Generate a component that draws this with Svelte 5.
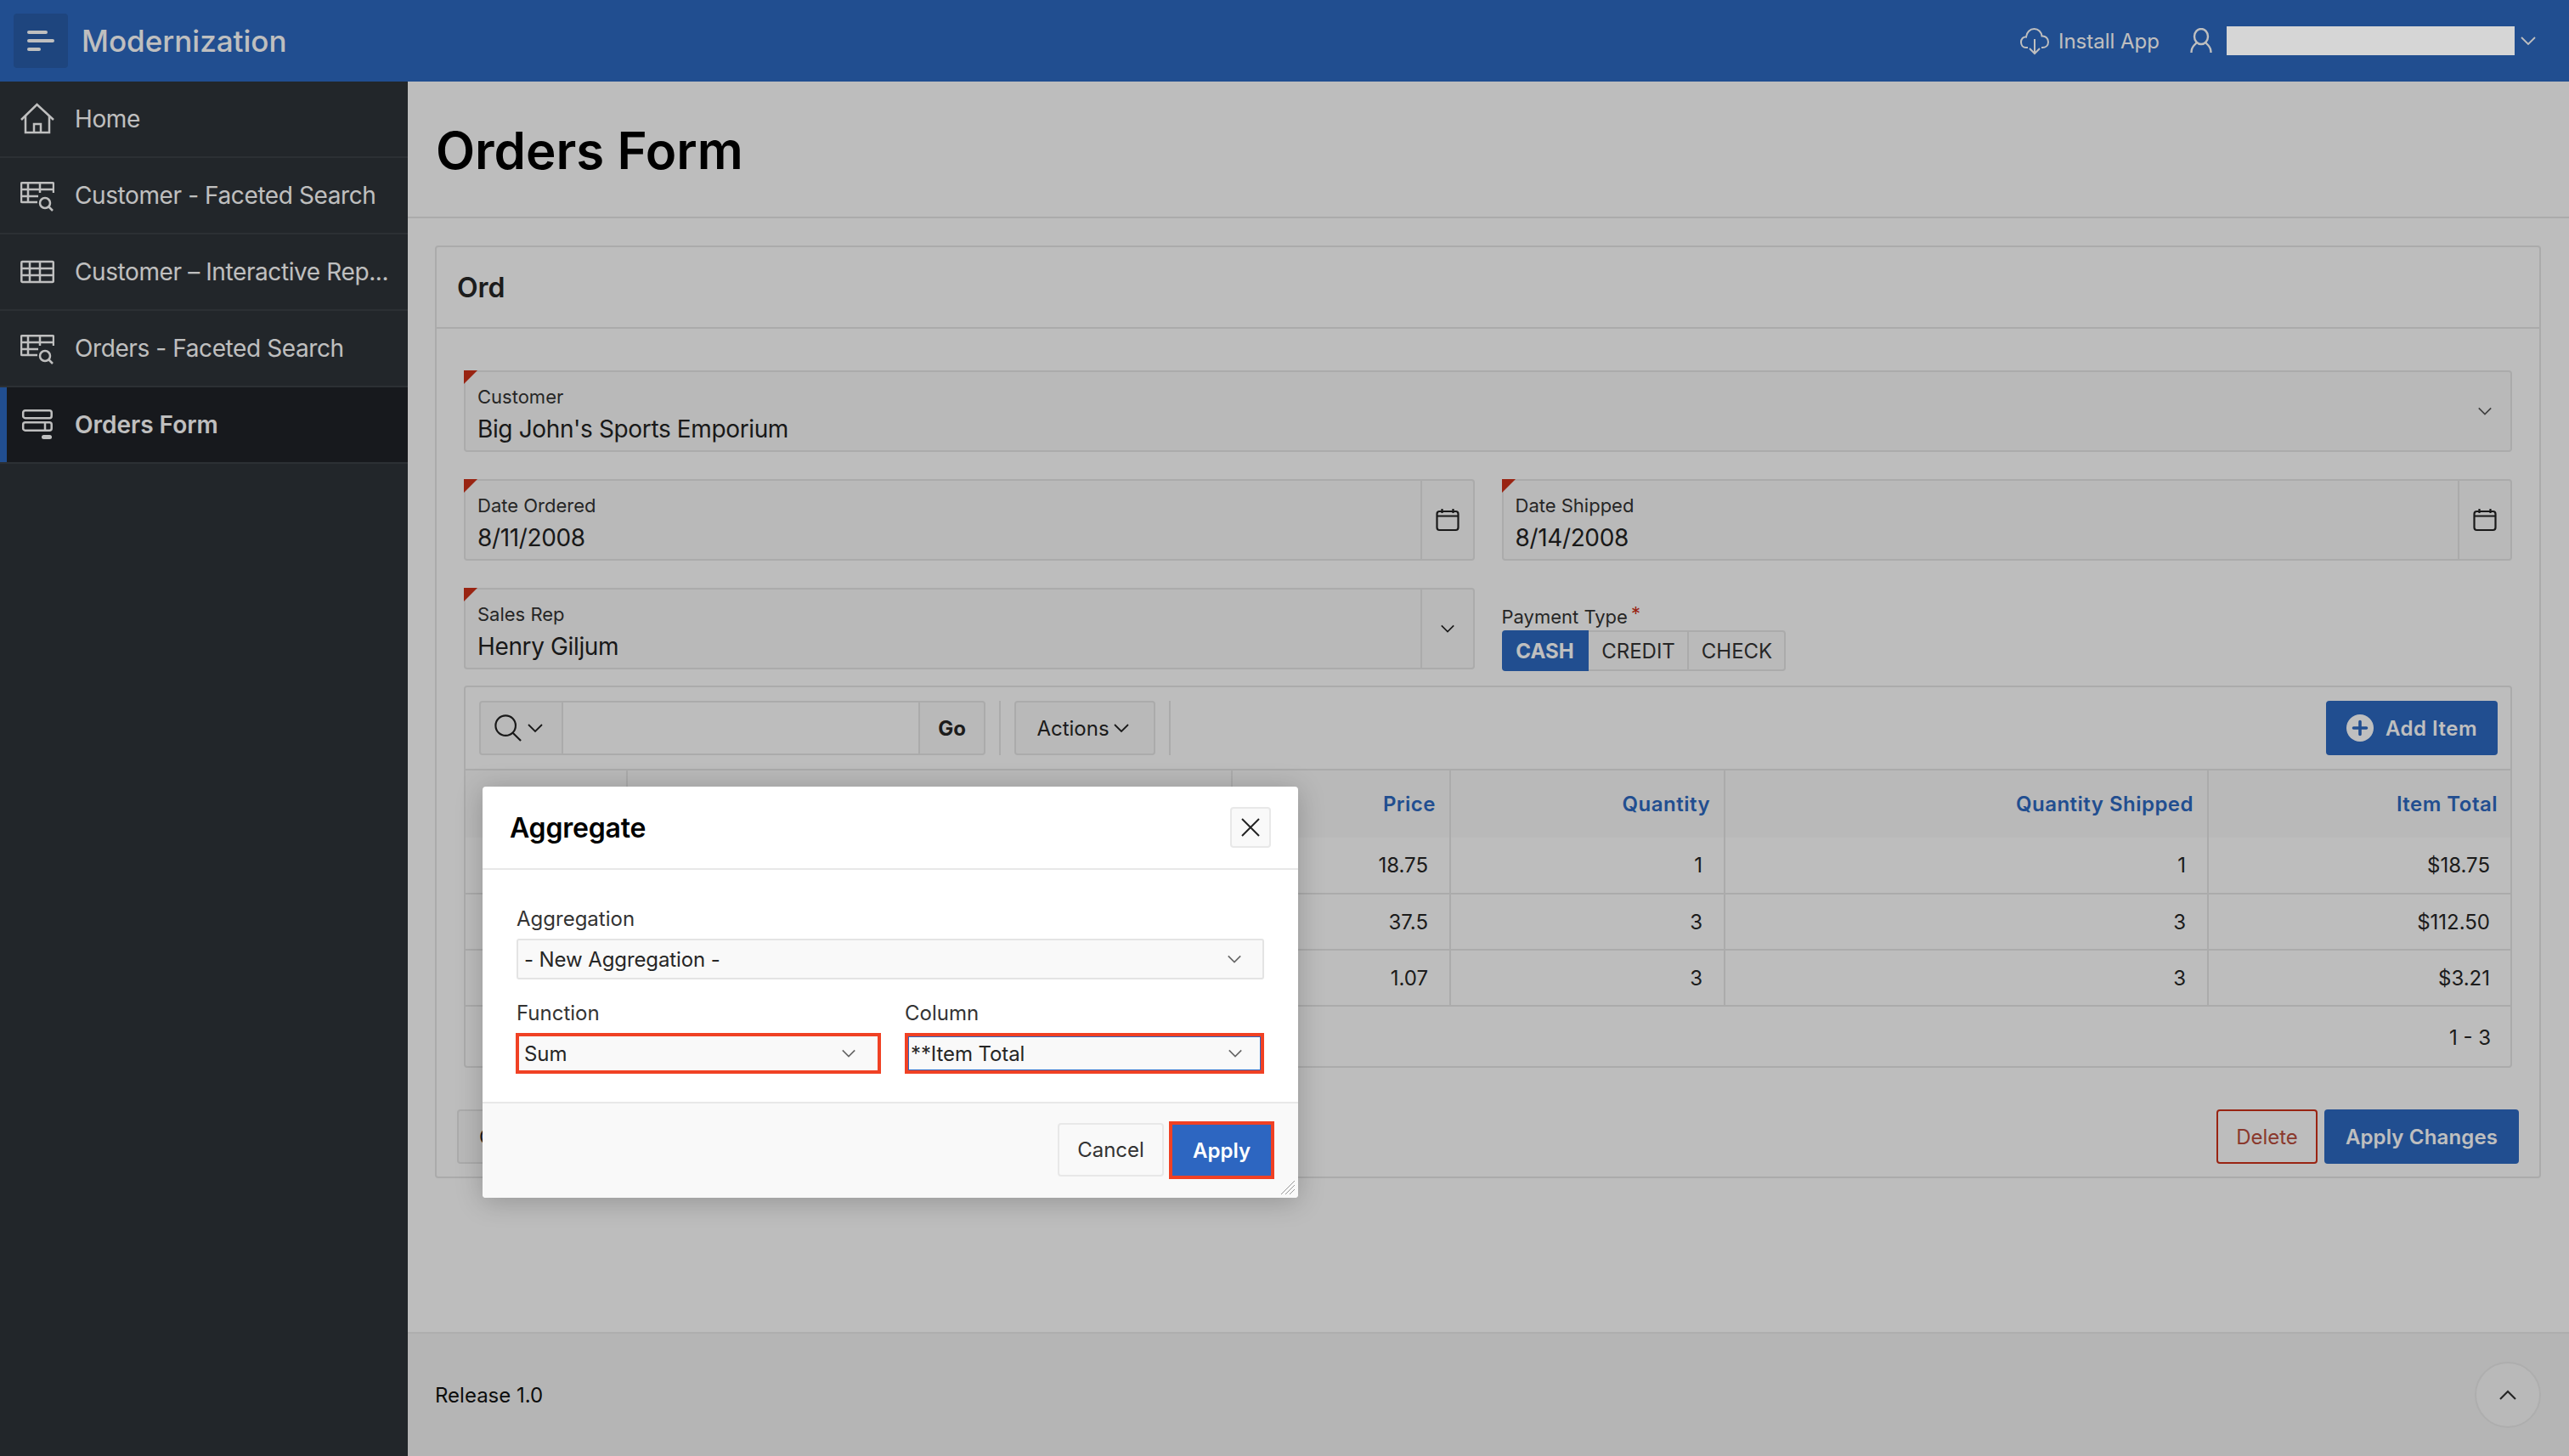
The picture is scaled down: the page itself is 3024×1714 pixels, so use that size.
<script>
  const nav = [
    { label: 'Home', icon: 'home' },
    { label: 'Customer - Faceted Search', icon: 'tsearch' },
    { label: 'Customer – Interactive Rep...', icon: 'table' },
    { label: 'Orders - Faceted Search', icon: 'tsearch' },
    { label: 'Orders Form', icon: 'form', active: true }
  ];
  const rows = [
    ['18.75', '1', '1', '$18.75'],
    ['37.5', '3', '3', '$112.50'],
    ['1.07', '3', '3', '$3.21']
  ];
</script>

{#snippet chevron(size = 20, stroke = '#555')}
  <svg class="chev" width={size} height={size} viewBox="0 0 20 20" fill="none" stroke={stroke} stroke-width="1.8"><path d="M2 6l8 8 8-8" /></svg>
{/snippet}

{#snippet calendar()}
  <svg width="28" height="28" viewBox="0 0 28 28" fill="none" stroke="#222" stroke-width="2.2"><rect x="1.5" y="4" width="25" height="22" rx="3" /><path d="M1.5 9.5h25M7.5 1v5M20.5 1v5" /></svg>
{/snippet}

<div class="app">
  <header class="top">
    <button class="toggle" aria-label="Toggle navigation">
      <svg width="32" height="24" viewBox="0 0 32 24" fill="#fff"><rect x="0" y="0" width="24" height="4" rx="2" /><rect x="0" y="10" width="32" height="4" rx="2" /><rect x="0" y="20" width="16" height="4" rx="2" /></svg>
    </button>
    <div class="brand">Modernization</div>
    <div class="top-right">
      <svg class="cloud" width="36" height="34" viewBox="0 0 36 34" fill="none" stroke="#fff" stroke-width="2"><path d="M10 25H8c-4 0-6-3-6-6.5S4.500 12 8 12.500C8.500 7 12.500 3 17.500 3S26 7 26.500 11.500C31 11 34 14.500 34 18.500S31 25 27 25h-1" /><path d="M18 15v17M12 26l6 6 6-6" /></svg>
      <span class="install">Install App</span>
      <svg class="user" width="26" height="30" viewBox="0 0 26 30" fill="none" stroke="#fff" stroke-width="2.4"><ellipse cx="13" cy="10" rx="8" ry="9" /><path d="M8 17l-3 3c-2 2-3.500 4-3.500 9M18 17l3 3c2 2 3.500 4 3.500 9" /></svg>
      <span class="redact"></span>
      {@render chevron(20, '#fff')}
    </div>
  </header>

  <div class="shell">
    <nav class="side">
      {#each nav as item}
        <a class="nav-row" class:active={item.active} href="#top">
          <span class="nav-ic">
            {#if item.icon === 'home'}
              <svg width="40" height="40" viewBox="0 0 40 40" fill="none" stroke="#fff" stroke-width="2.5"><path d="M1 21L19.500 3 39 21" /><path d="M6 16v20h28V16M16 36V26h8v10" /></svg>
            {:else if item.icon === 'tsearch'}
              <svg width="40" height="40" viewBox="0 0 40 40" fill="none" stroke="#fff" stroke-width="2.5"><path d="M39 17V6.300a1 1 0 0 0-1-1H2a1 1 0 0 0-1 1V27a1 1 0 0 0 1 1h18M1 13h38M1 21h20M9 5.300V28M23 5.300V17" /><circle cx="29" cy="29" r="6" /><path d="M33.500 33.500L38 38" /></svg>
            {:else if item.icon === 'table'}
              <svg width="40" height="40" viewBox="0 0 40 40" fill="none" stroke="#fff" stroke-width="2.500"><rect x="1.300" y="8" width="37.500" height="24" rx="1" /><path d="M1 16h38M1 24h38M11 8v24M23 8v24" /></svg>
            {:else}
              <svg width="40" height="40" viewBox="0 0 40 40" fill="none" stroke="#fff" stroke-width="2.500"><rect x="3.200" y="3.200" width="33.500" height="9" rx="2.500" /><rect x="3.200" y="17.200" width="33.500" height="9.500" rx="2.500" /><path d="M29 17v10" /><rect x="25" y="32" width="12" height="5" rx="2.500" fill="#fff" stroke="none" /></svg>
            {/if}
          </span>
          <span class="nav-label">{item.label}</span>
        </a>
      {/each}
    </nav>

    <main class="main">
      <div class="title-band"><h1>Orders Form</h1></div>

      <div class="content">
        <section class="card">
          <div class="card-head">Ord</div>
          <div class="card-body">
            <div class="field wide">
              <i class="req"></i>
              <div class="fld-main"><label for="f1">Customer</label><div id="f1" class="val">Big John's Sports Emporium</div></div>
              <span class="fld-chev">{@render chevron(18, '#555')}</span>
            </div>

            <div class="two">
              <div class="field">
                <i class="req"></i>
                <div class="fld-main"><label for="f2">Date Ordered</label><div id="f2" class="val">8/11/2008</div></div>
                <span class="fld-btn">{@render calendar()}</span>
              </div>
              <div class="field">
                <i class="req"></i>
                <div class="fld-main"><label for="f3">Date Shipped</label><div id="f3" class="val">8/14/2008</div></div>
                <span class="fld-btn">{@render calendar()}</span>
              </div>
            </div>

            <div class="two">
              <div class="field">
                <i class="req"></i>
                <div class="fld-main"><label for="f4">Sales Rep</label><div id="f4" class="val">Henry Giljum</div></div>
                <span class="fld-btn">{@render chevron(18, '#222')}</span>
              </div>
              <div class="pay">
                <div class="pay-label">Payment Type<span class="star">*</span></div>
                <div class="seg">
                  <span class="seg-on">CASH</span><span>CREDIT</span><span>CHECK</span>
                </div>
              </div>
            </div>

            <div class="grid-region">
              <div class="toolbar">
                <div class="search">
                  <span class="s-ic">
                    <svg width="32" height="32" viewBox="0 0 34 34" fill="none" stroke="#222" stroke-width="2.300"><circle cx="14" cy="14" r="12.500" /><path d="M23 23l10 10" /></svg>
                    {@render chevron(20, '#222')}
                  </span>
                  <span class="s-input"></span>
                  <span class="s-go">Go</span>
                </div>
                <span class="t-sep"></span>
                <span class="actions">Actions {@render chevron(20, '#222')}</span>
                <span class="t-sep"></span>
                <span class="grow"></span>
                <span class="add">
                  <svg width="32" height="32" viewBox="0 0 32 32"><circle cx="16" cy="16" r="16" fill="#fff" /><path d="M16 8.500v15M8.500 16h15" stroke="#2d68c0" stroke-width="3.600" stroke-linecap="round" /></svg>
                  Add Item
                </span>
              </div>
              <table>
                <colgroup><col class="c1" /><col class="c2" /><col class="c3" /><col class="c4" /><col class="c5" /><col /></colgroup>
                <thead>
                  <tr><th></th><th></th><th>Price</th><th>Quantity</th><th>Quantity Shipped</th><th>Item Total</th></tr>
                </thead>
                <tbody>
                  {#each rows as r}
                    <tr><td></td><td></td>{#each r as c}<td>{c}</td>{/each}</tr>
                  {/each}
                </tbody>
              </table>
              <div class="pager">1 - 3</div>
            </div>

            <div class="btn-row">
              <span class="btn">Cancel</span>
              <span class="grow"></span>
              <span class="btn del">Delete</span>
              <span class="btn primary">Apply Changes</span>
            </div>
          </div>
        </section>
      </div>

      <footer class="foot">
        <span>Release 1.0</span>
        <span class="to-top"><svg width="20" height="12" viewBox="0 0 20 12" fill="none" stroke="#333" stroke-width="2.200"><path d="M1 11l9-9 9 9" /></svg></span>
      </footer>
    </main>
  </div>

  <div class="overlay"></div>

  <div class="dialog" role="dialog" aria-label="Aggregate">
    <div class="d-head">
      <h2>Aggregate</h2>
      <button class="d-close" aria-label="Close">
        <svg width="22" height="22" viewBox="0 0 22 22" fill="none" stroke="#222" stroke-width="2"><path d="M1 1l20 20M21 1L1 21" /></svg>
      </button>
    </div>
    <div class="d-body">
      <div class="d-label">Aggregation</div>
      <div class="d-select">- New Aggregation -{@render chevron(18, '#666')}</div>
      <div class="d-two">
        <div class="d-col fn">
          <div class="d-label">Function</div>
          <div class="d-select marked">Sum{@render chevron(18, '#666')}</div>
        </div>
        <div class="d-col cl">
          <div class="d-label">Column</div>
          <div class="d-select marked focus">**Item Total{@render chevron(18, '#666')}</div>
        </div>
      </div>
    </div>
    <div class="d-foot">
      <span class="d-btn">Cancel</span>
      <span class="d-btn apply">Apply</span>
      <svg class="grip" width="18" height="18" viewBox="0 0 18 18" fill="none" stroke="#999" stroke-width="1"><path d="M17 1L1 17M17 6L6 17M17 11L11 17" /></svg>
    </div>
  </div>
</div>

<style>
  :global(body) { margin: 0; background: #fdfdfd; font-family: Inter, "Liberation Sans", sans-serif; color: #262626; }
  .app { position: relative; width: 3024px; height: 1714px; overflow: hidden; display: flex; flex-direction: column; }
  a { color: inherit; text-decoration: none; }
  .top { height: 96px; flex: none; background: #2d68c0; display: flex; align-items: center; padding: 0 16px; box-sizing: border-box; color: #fff; }
  .toggle { width: 64px; height: 64px; background: #285da9; border: 0; border-radius: 4px; display: flex; align-items: center; justify-content: center; padding: 0; }
  .brand { margin-left: 16px; font-size: 35px; font-weight: 500; }
  .top-right { margin-left: auto; display: flex; align-items: center; padding-right: 22px; }
  .cloud { margin-right: 10px; }
  .install { font-size: 24px; margin-right: 36px; }
  .user { margin-right: 17px; }
  .redact { position: relative; z-index: 20; width: 339px; height: 34px; background: #d6d6d6; margin-right: 6px; }
  .shell { flex: 1; display: flex; min-height: 0; }
  .side { width: 480px; flex: none; background: #2e3338; color: #fff; }
  .nav-row { height: 90px; box-sizing: border-box; border-bottom: 2px solid #3b4046; display: flex; align-items: center; padding-left: 24px; font-size: 28px; letter-spacing: -0.4px; }
  .nav-row.active { background: #1f2227; box-shadow: inset 8px 0 0 #2d68c0; font-weight: 600; letter-spacing: 0; }
  .nav-ic { width: 40px; height: 40px; margin-right: 24px; flex: none; display: flex; }
  .nav-label { white-space: nowrap; }
  .main { flex: 1; display: flex; flex-direction: column; min-width: 0; }
  .title-band { height: 161px; flex: none; box-sizing: border-box; border-bottom: 2px solid #e4e4e4; display: flex; align-items: center; padding-left: 33px; padding-top: 2px; }
  h1 { margin: 0; font-size: 60px; font-weight: 600; color: #000; line-height: 1; }
  .content { flex: 1; padding: 32px 33px 0 32px; min-height: 0; }
  .card { border: 2px solid #e4e4e4; border-radius: 4px; background: #fdfdfd; height: 1098px; box-sizing: border-box; }
  .card-head { height: 96px; box-sizing: border-box; border-bottom: 2px solid #e4e4e4; display: flex; align-items: center; padding-left: 24px; font-size: 32px; font-weight: 600; }
  .card-body { padding: 49px 32px 0; }
  .two { display: grid; grid-template-columns: 1fr 1fr; column-gap: 32px; margin-top: 32px; }
  .field { position: relative; height: 96px; box-sizing: border-box; border: 2px solid #e4e4e4; border-radius: 4px; background: #f7f7f7; display: flex; align-items: stretch; }
  .req { position: absolute; left: -2px; top: -2px; width: 0; height: 0; border-top: 16px solid #cd3019; border-right: 16px solid transparent; }
  .fld-main { flex: 1; padding: 14px 0 0 14px; display: flex; flex-direction: column; }
  .fld-main label { font-size: 22px; line-height: 30px; color: #333; }
  .val { font-size: 28px; line-height: 36px; margin-top: 5px; color: #222; letter-spacing: -0.37px; }
  .fld-chev { width: 60px; display: flex; align-items: center; justify-content: center; }
  .fld-btn { width: 60px; border-left: 2px solid #e4e4e4; display: flex; align-items: center; justify-content: center; }
  .chev { flex: none; }
  .pay { padding-top: 20px; }
  .pay-label { font-size: 22px; line-height: 28px; color: #333; height: 30px; }
  .star { color: #cd3019; margin-left: 4px; position: relative; top: -4px; }
  .seg { display: flex; height: 48px; font-size: 24px; }
  .seg span { box-sizing: border-box; border: 2px solid #e4e4e4; border-left: 0; display: flex; align-items: center; justify-content: center; background: #f9f9f9; width: 118px; padding-left: 2px; color: #333; }
  .seg span:last-child { width: 114px; border-radius: 0 4px 4px 0; }
  .seg .seg-on { background: #2d68c0; border: 0; width: 102px; padding-left: 0; color: #fff; font-weight: 700; border-radius: 4px 0 0 4px; }
  .grid-region { margin-top: 17px; border: 2px solid #e4e4e4; border-radius: 4px; height: 450px; box-sizing: border-box; background: #fdfdfd; }
  .toolbar { height: 96px; box-sizing: border-box; padding: 16px 15px 0 16px; display: flex; align-items: flex-start; }
  .search { width: 596px; height: 64px; box-sizing: border-box; border: 2px solid #e4e4e4; border-radius: 4px; display: flex; background: #f7f7f7; }
  .s-ic { width: 97px; border-right: 2px solid #e4e4e4; display: flex; align-items: center; padding-left: 16px; gap: 6px; flex: none; box-sizing: border-box; }
  .s-input { flex: 1; background: #fdfdfd; }
  .s-go { width: 77px; border-left: 2px solid #e4e4e4; box-sizing: border-box; display: flex; align-items: center; justify-content: center; font-size: 24px; font-weight: 700; }
  .t-sep { width: 2px; height: 64px; background: #e4e4e4; margin: 0 16px; flex: none; }
  .actions { width: 166px; height: 64px; box-sizing: border-box; border: 2px solid #e4e4e4; border-radius: 4px; background: #f7f7f7; display: flex; align-items: center; justify-content: center; gap: 4px; padding-right: 4px; font-size: 24px; }
  .grow { flex: 1; }
  .add { width: 202px; height: 64px; background: #2d68c0; color: #fff; border-radius: 4px; display: flex; align-items: center; justify-content: center; gap: 14px; font-size: 24px; font-weight: 600; letter-spacing: 0.5px; }
  table { border-collapse: collapse; table-layout: fixed; width: 100%; font-size: 24px; border-top: 2px solid #e4e4e4; border-bottom: 2px solid #e4e4e4; }
  .c1 { width: 190px; }
  .c2 { width: 712px; }
  .c3 { width: 257px; }
  .c4 { width: 323px; }
  .c5 { width: 569px; }
  th { height: 80px; background: #f7f7f7; color: #2d68c0; font-weight: 600; text-align: right; padding: 0 16px; border-right: 2px solid #e4e4e4; box-sizing: border-box; letter-spacing: 0.48px; }
  th:last-child { padding-right: 15px; }
  td { height: 66px; text-align: right; padding: 0 25px; border-right: 2px solid #e4e4e4; border-top: 2px solid #e4e4e4; box-sizing: border-box; color: #262626; }
  td:last-child { padding-right: 24px; }
  thead + tbody tr:first-child td { border-top: 0; }
  th:last-child, td:last-child { border-right: 0; }
  .pager { text-align: right; padding: 22px 23px 0; font-size: 24px; }
  .btn-row { margin: 49px -8px 0; display: flex; gap: 8px; }
  .btn { height: 64px; box-sizing: border-box; border: 2px solid #e4e4e4; border-radius: 4px; display: flex; align-items: center; justify-content: center; font-size: 24px; padding: 0 24px; background: #f7f7f7; }
  .btn.del { border-color: #cd3019; color: #b94d3c; background: #fdfdfd; width: 119px; padding: 0; font-weight: 400; }
  .btn.primary { background: #2d68c0; border: 0; color: #fff; width: 229px; padding: 0; font-weight: 600; letter-spacing: 0.15px; }
  .foot { height: 146px; flex: none; box-sizing: border-box; background: #f2f2f2; border-top: 2px solid #e9e9e9; display: flex; align-items: center; justify-content: space-between; padding: 0 33px 0 32px; font-size: 24px; color: #111; }
  .to-top { width: 78px; height: 78px; border: 2px solid #e8e8e8; background: #f7f7f7; border-radius: 50%; display: flex; align-items: center; justify-content: center; box-sizing: border-box; }
  .overlay { position: absolute; inset: 0; background: rgba(0, 0, 0, 0.25); z-index: 10; }
  .dialog { position: absolute; left: 568px; top: 926px; width: 960px; height: 484px; z-index: 30; background: #fff; border-radius: 4px; box-shadow: 0 4px 32px rgba(0, 0, 0, 0.22); display: flex; flex-direction: column; }
  .d-head { height: 98px; flex: none; box-sizing: border-box; border-bottom: 2px solid #e8e8e8; display: flex; align-items: center; justify-content: space-between; padding: 0 32px 0 32px; }
  h2 { margin: 0; font-size: 32px; font-weight: 600; color: #000; letter-spacing: -0.2px; }
  .d-close { width: 48px; height: 48px; box-sizing: border-box; border: 2px solid #e8e8e8; border-radius: 4px; background: #f9f9f9; padding: 0; display: flex; align-items: center; justify-content: center; }
  .d-body { flex: 1; padding: 41px 40px 0 40px; }
  .d-label { font-size: 24px; line-height: 34px; color: #333; margin-bottom: 6px; }
  .d-select { height: 48px; box-sizing: border-box; border: 2px solid #e4e4e4; border-radius: 3px; background: #f9f9f9; display: flex; align-items: center; justify-content: space-between; padding: 0 24px 0 7px; font-size: 24px; color: #262626; letter-spacing: -0.1px; }
  .d-two { display: grid; grid-template-columns: 430px 423px; column-gap: 28px; margin: 23px -2px 0 -1px; }
  .d-two .d-label { margin-left: 1px; margin-bottom: 6px; }
  .d-col.cl .d-label { margin-left: 0; }
  .marked { outline: 4px solid #f04124; outline-offset: -4px; border: 0; padding: 0 29px 0 10px; border-radius: 0; }
  .marked.focus { box-shadow: inset 0 0 0 5px #2d66c1; padding: 0 25px 0 7px; }
  .d-foot { position: relative; height: 113px; flex: none; box-sizing: border-box; background: #f9f9f9; border-top: 2px solid #e8e8e8; border-radius: 0 0 4px 4px; display: flex; justify-content: flex-end; align-items: flex-start; gap: 6px; padding: 23px 28px 0 0; }
  .d-btn { width: 125px; height: 63px; box-sizing: border-box; border: 2px solid #e8e8e8; border-radius: 4px; background: #f9f9f9; display: flex; align-items: center; justify-content: center; font-size: 24px; color: #333; }
  .d-btn.apply { width: 124px; height: 68px; margin-top: -2px; background: #2d66c1; color: #fff; font-weight: 600; border: 4px solid #f04124; border-radius: 0; }
  .grip { position: absolute; right: 3px; bottom: 3px; }
</style>
